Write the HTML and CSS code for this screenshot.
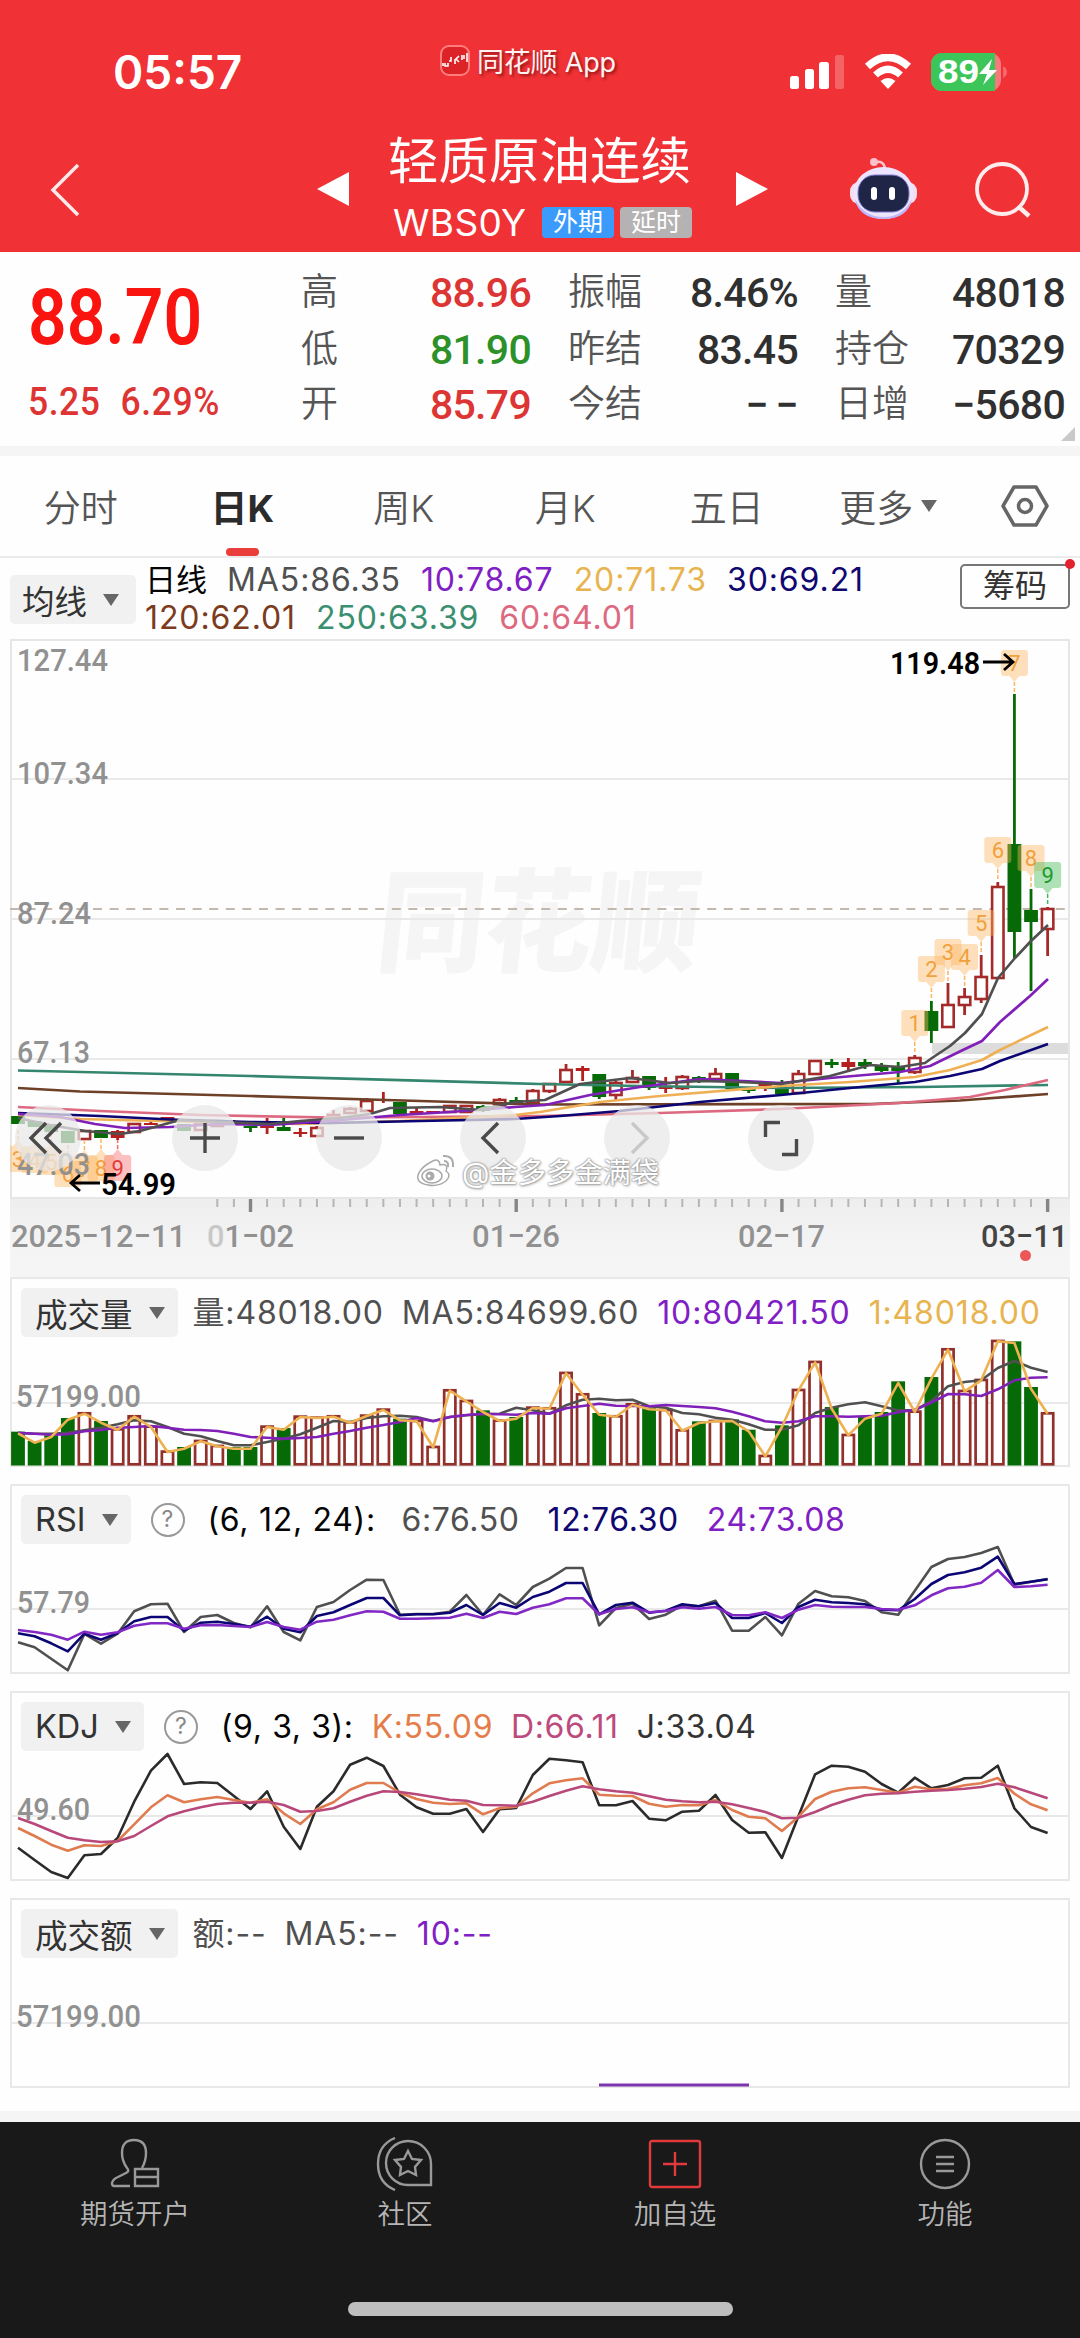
FILE: index.html
```
<!DOCTYPE html>
<html lang="zh-CN">
<head>
    <meta charset="UTF-8">
    <title>轻质原油连续 WBS0Y</title>
    <link rel="stylesheet" href="styles.css">
</head>
<body>
    <header class="header">
        <div class="status-bar">
            <div class="time">05:57</div>
            <div class="app-name">
                <svg width="30" height="31" viewBox="0 0 30 31">
                    <rect x="1" y="1" width="28" height="29" rx="8" fill="#dc2327" stroke="#ff7d7d" stroke-width="2"/>
                    <path d="M3 18v3M5 18v3h3v-3M11 12v4h-2M15 14v5M19 11l-3 3 3 3M22 10v5M24 10v4M27 8v9" stroke="#fff" stroke-width="1.6" fill="none"/>
                </svg>
                <span>同花顺 App</span>
            </div>
            <div class="status-icons">
                <svg width="54" height="36" viewBox="0 0 54 36">
                    <rect x="0" y="22" width="9" height="13" rx="2.5" fill="#fff"/>
                    <rect x="15" y="15" width="9" height="20" rx="2.5" fill="#fff"/>
                    <rect x="29" y="8" width="10" height="27" rx="2.5" fill="#fff"/>
                    <rect x="45" y="1" width="9" height="34" rx="2.5" fill="#fff" opacity=".25"/>
                </svg>
                <svg class="wifi" width="48" height="36" viewBox="0 0 48 36">
                    <path d="M3.500 12.500Q24-6 44.500 12.500" fill="none" stroke="#fff" stroke-width="7.500"/>
                    <path d="M11.500 21Q24 9.500 36.500 21" fill="none" stroke="#fff" stroke-width="7"/>
                    <path d="M16.500 27Q24 21 31.500 27L24 35Z" fill="#fff"/>
                </svg>
                <svg class="battery" width="76" height="40" viewBox="0 0 76 40">
                    <rect x="0" y="1" width="70" height="38" rx="11" fill="#f67a7d"/>
                    <path d="M11 1H64V39H11A11 11 0 0 1 0 28V12A11 11 0 0 1 11 1Z" fill="#3cc65a"/>
                    <path d="M72 14Q76 16 76 20T72 26Z" fill="#f5666a"/>
                    <text x="7" y="31" textLength="41" lengthAdjust="spacingAndGlyphs" class="battery-text">89</text>
                    <path d="M61 7L48 22H56L52 33L66 18H58Z" fill="#fff"/>
                </svg>
            </div>
        </div>
        <div class="nav-bar">
            <svg class="back" width="30" height="54" viewBox="0 0 30 54">
                <path d="M28 2L3 27L28 52" fill="none" stroke="#ffe9ea" stroke-width="3.500"/>
            </svg>
            <svg class="prev" width="32" height="34" viewBox="0 0 32 34"><path d="M0 17L32 0V34Z" fill="#fff"/></svg>
            <div class="title">
                <h1>轻质原油连续</h1>
                <div class="code-row">
                    <span class="code">WBS0Y</span>
                    <span class="badge blue">外期</span>
                    <span class="badge gray">延时</span>
                </div>
            </div>
            <svg class="next" width="32" height="34" viewBox="0 0 32 34"><path d="M32 17L0 0V34Z" fill="#fff"/></svg>
            <svg class="robot" width="68" height="62" viewBox="0 0 68 62">
                <path d="M25 5Q34 3 35 12" fill="none" stroke="#ffc4cd" stroke-width="2.500"/>
                <circle cx="24" cy="5" r="4" fill="#ffc0ca"/>
                <rect x="0" y="25" width="67" height="22" rx="9" fill="#f6dcf0"/>
                <ellipse cx="33.500" cy="36" rx="30" ry="26" fill="#ede4ff"/>
                <path d="M5 42Q14 60 33.500 60T62 42Q58 62 33.500 62T5 42Z" fill="#bdb6fb"/>
                <rect x="8" y="18" width="51" height="37" rx="17" fill="#1e2546" stroke="#7e7cc9" stroke-width="1"/>
                <rect x="21" y="30" width="6" height="13" rx="3" fill="#fff"/>
                <rect x="39" y="30" width="6" height="13" rx="3" fill="#fff"/>
            </svg>
            <svg class="search" width="56" height="56" viewBox="0 0 56 56">
                <circle cx="27" cy="27" r="25" fill="none" stroke="#ffeced" stroke-width="3.800"/>
                <path d="M44 45L54 54" stroke="#ffeced" stroke-width="4.500"/>
            </svg>
        </div>
    </header>

    <section class="quote">
        <div class="price">
            <div class="last">88.70</div>
            <div class="change"><span>5.25</span><span>6.29%</span></div>
        </div>
        <div class="quote-grid">
            <span class="label">高</span><span class="value up">88.96</span>
            <span class="label">振幅</span><span class="value">8.46%</span>
            <span class="label">量</span><span class="value">48018</span>
            <span class="label">低</span><span class="value down">81.90</span>
            <span class="label">昨结</span><span class="value">83.45</span>
            <span class="label">持仓</span><span class="value">70329</span>
            <span class="label">开</span><span class="value up">85.79</span>
            <span class="label">今结</span><span class="value">−&thinsp;−</span>
            <span class="label">日增</span><span class="value">−5680</span>
        </div>
        <div class="corner"></div>
    </section>

    <nav class="tabs">
        <div class="tab">分时</div>
        <div class="tab active">日K</div>
        <div class="tab">周K</div>
        <div class="tab">月K</div>
        <div class="tab">五日</div>
        <div class="tab">更多<i class="arrow small"></i></div>
        <svg width="48" height="42" viewBox="0 0 48 42">
            <path d="M13 2H35L46 21L35 40H13L2 21Z" fill="none" stroke="#666" stroke-width="3.500" stroke-linejoin="round"/>
            <circle cx="24" cy="21" r="6.500" fill="none" stroke="#666" stroke-width="3.500"/>
        </svg>
    </nav>

    <section class="ma-bar">
        <div class="tag">均线<i class="arrow"></i></div>
        <div class="ma-list">
            <div class="ma-row">
                <span class="c-black">日线</span>
                <span class="c-dark">MA5:86.35</span>
                <span class="c-purple">10:78.67</span>
                <span class="c-yellow">20:71.73</span>
                <span class="c-navy">30:69.21</span>
            </div>
            <div class="ma-row">
                <span class="c-brown">120:62.01</span>
                <span class="c-teal">250:63.39</span>
                <span class="c-pink">60:64.01</span>
            </div>
        </div>
        <div class="chips">筹码</div>
    </section>

    <section class="kline">
        <svg id="kline" width="1060" height="560" viewBox="10 639 1060 560"></svg>
        <div class="chart-tools">
            <div class="tool"><svg width="66" height="66"><path d="M31 18L16 33L31 48M46 18L31 33L46 48"/></svg></div>
            <div class="tool"><svg width="66" height="66"><path d="M33 18V48M18 33H48"/></svg></div>
            <div class="tool"><svg width="66" height="66"><path d="M18 33H48"/></svg></div>
            <div class="tool"><svg width="66" height="66"><path d="M38 18L23 33L38 48"/></svg></div>
            <div class="tool off"><svg width="66" height="66"><path d="M28 18L43 33L28 48"/></svg></div>
            <div class="tool"><svg width="66" height="66"><path d="M32 17.500H17.500V32M34 49.500H48.500V34"/></svg></div>
        </div>
        <div class="author">
            <svg width="40" height="34" viewBox="0 0 40 34">
                <path d="M15 9Q23 4 24 12Q33 10 30 18Q36 22 30 28Q22 34 12 32Q0 30 2 22Q5 14 15 9Z" fill="#fff" stroke="#a9a9a9" stroke-width="1.500"/>
                <ellipse cx="16" cy="23" rx="10" ry="7" fill="#fff" stroke="#a9a9a9" stroke-width="1.500"/>
                <circle cx="14" cy="23" r="4.500" fill="#aaa"/>
                <circle cx="13" cy="23" r="1.500" fill="#fff"/>
                <path d="M27 3Q38 2 37 14M28 8Q33 8 32 14" fill="none" stroke="#aaa" stroke-width="2"/>
            </svg>
            <span>@金多多金满袋</span>
        </div>
    </section>
    <svg id="timeline" class="timeline" width="1060" height="78" viewBox="10 1199 1060 78"></svg>

    <section class="panel">
        <div class="panel-head">
            <div class="tag">成交量<i class="arrow"></i></div>
            <div class="values volume-values">
                <span class="c-dark">量:48018.00</span>
                <span class="c-dark">MA5:84699.60</span>
                <span class="c-purple">10:80421.50</span>
                <span class="c-yellow">1:48018.00</span>
            </div>
        </div>
        <svg id="volume" class="plot" width="1060" height="190" viewBox="10 0 1060 190"></svg>
    </section>
    <section class="panel">
        <div class="panel-head">
            <div class="tag">RSI<i class="arrow"></i></div>
            <div class="help">?</div>
            <div class="values rsi-values">
                <span class="c-black">(6, 12, 24):</span>
                <span class="c-dark">6:76.50</span>
                <span class="c-navy">12:76.30</span>
                <span class="c-purple">24:73.08</span>
            </div>
        </div>
        <svg id="rsi" class="plot" width="1060" height="190" viewBox="10 0 1060 190"></svg>
    </section>
    <section class="panel">
        <div class="panel-head">
            <div class="tag">KDJ<i class="arrow"></i></div>
            <div class="help">?</div>
            <div class="values kdj-values">
                <span class="c-black">(9, 3, 3):</span>
                <span class="c-orange">K:55.09</span>
                <span class="c-rose">D:66.11</span>
                <span class="c-ink">J:33.04</span>
            </div>
        </div>
        <svg id="kdj" class="plot" width="1060" height="190" viewBox="10 0 1060 190"></svg>
    </section>
    <section class="panel">
        <div class="panel-head">
            <div class="tag">成交额<i class="arrow"></i></div>
            <div class="values volume-values">
                <span class="c-dark">额:--</span>
                <span class="c-dark">MA5:--</span>
                <span class="c-purple">10:--</span>
            </div>
        </div>
        <svg id="amount" class="plot" width="1060" height="190" viewBox="10 0 1060 190"></svg>
    </section>

    <footer class="bottom">
        <div class="bottom-nav">
            <div class="item">
                <svg width="54" height="54" viewBox="0 0 54 54">
                    <path d="M22 49H6Q4 49 4 46Q5 42 10 40L18 36Q22 34 19 31Q14 24 14 16Q14 3 26 3T38 16Q38 24 34 31"/>
                    <path d="M27 32H50V49H27ZM27 40H50"/>
                </svg>
                <span>期货开户</span>
            </div>
            <div class="item">
                <svg width="58" height="54" viewBox="0 0 58 54">
                    <path d="M32 4A23 23 0 0 1 55 27V48H32A22 22 0 0 1 32 4Z"/>
                    <path d="M19 1Q2 8 2 27T19 53"/>
                    <path d="M32 14L36 22L45 23L39 30L40 38L32 34L24 38L25 30L19 23L28 22Z"/>
                </svg>
                <span>社区</span>
            </div>
            <div class="item">
                <svg class="red" width="54" height="54" viewBox="0 0 54 54">
                    <rect x="2" y="4" width="50" height="46" rx="2"/>
                    <path d="M27 15V39M15 27H39"/>
                </svg>
                <span>加自选</span>
            </div>
            <div class="item">
                <svg width="54" height="54" viewBox="0 0 54 54">
                    <circle cx="27" cy="27" r="24"/>
                    <path d="M18 20H36M18 27H36M18 34H36"/>
                </svg>
                <span>功能</span>
            </div>
        </div>
        <div class="home-bar"></div>
    </footer>
    <script src="charts.js"></script>
</body>
</html>
```

FILE: styles.css
```
* {
    box-sizing: border-box;
}
body {
    margin: 0;
    width: 1080px;
    height: 2338px;
    overflow: hidden;
    background-color: #fefefe;
    font-family: Inter, "Noto Sans CJK SC", sans-serif;
    color: #333;
}
svg {
    display: block;
}

/* Header */
.header {
    height: 252px;
    background-color: #f03135;
    color: #fff;
}
.status-bar {
    display: grid;
    grid-template-columns: 440px 350px 1fr;
    height: 126px;
    padding-top: 44px;
}
.time {
    padding-left: 113px;
    font-size: 46px;
    line-height: 56px;
    font-weight: 600;
}
.app-name {
    display: flex;
    align-items: center;
    gap: 7px;
    height: 31px;
    margin-top: 1px;
    font-size: 27px;
    color: #fff2f2;
    white-space: nowrap;
    letter-spacing: -0.2px;
    text-shadow: 2px 2px 3px rgba(80, 0, 0, 0.6);
}
.status-icons {
    display: flex;
    align-items: center;
    height: 56px;
}
.wifi {
    margin-left: 20px;
}
.battery {
    margin-left: 19px;
}
.battery-text {
    font: 700 34px "Liberation Sans", sans-serif;
    fill: #fff;
}
.nav-bar {
    display: flex;
    height: 126px;
}
.back {
    margin: 37px 0 0 50px;
}
.prev {
    margin: 46px 0 0 237px;
}
.title {
    width: 302px;
    margin: 0 43px 0 42px;
}
.title h1 {
    margin: 1px -10px 0 -3px;
    font-size: 50.5px;
    line-height: 68px;
    font-weight: 400;
    white-space: nowrap;
}
.code-row {
    display: flex;
    align-items: center;
    height: 38px;
    margin-top: 8px;
    padding-left: 2px;
}
.code {
    width: 149px;
    font-size: 37px;
    letter-spacing: 0.4px;
    flex-shrink: 0;
}
.badge {
    width: 72px;
    height: 31px;
    margin-right: 6px;
    border-radius: 4px;
    font-size: 25px;
    line-height: 30px;
    text-align: center;
    flex-shrink: 0;
}
.blue {
    background-color: #3b9bfd;
}
.gray {
    background-color: #b4b2b2;
}
.next {
    margin-top: 46px;
}
.robot {
    margin: 31px 0 0 82px;
}
.search {
    margin: 36px 0 0 57px;
}

/* Quote */
.quote {
    display: flex;
    position: relative;
    height: 204px;
    border-bottom: 10px solid #f5f5f5;
    font-family: Roboto, "Noto Sans CJK SC", sans-serif;
}
.price {
    width: 264px;
    padding-left: 28px;
    white-space: nowrap;
}
.last {
    margin-top: 22px;
    font-size: 77px;
    line-height: 88px;
    font-weight: 600;
    color: #fa1410;
    transform: scaleX(0.88);
    transform-origin: left;
}
.change {
    display: flex;
    gap: 22px;
    margin-top: 16px;
    font-size: 39px;
    line-height: 48px;
    font-weight: 500;
    letter-spacing: 0.6px;
    color: #dd3434;
    transform: scaleX(0.91);
    transform-origin: left;
}
.quote-grid {
    display: grid;
    grid-template-columns: 147px 120px 147px 120px 147px 120px;
    grid-template-rows: 57px 55px 56px;
    padding-top: 14px;
}
.label {
    padding-left: 37px;
    font-size: 37px;
    line-height: 54px;
    font-weight: 350;
    color: #555;
    white-space: nowrap;
}
.value {
    font-size: 41px;
    line-height: 54px;
    font-weight: 500;
    letter-spacing: -0.7px;
    text-align: right;
    color: #303030;
    white-space: nowrap;
}
.up {
    color: #dd3434;
}
.down {
    color: #2d9129;
}
.corner {
    position: absolute;
    right: 5px;
    bottom: 5px;
    border-left: 14px solid transparent;
    border-bottom: 14px solid #c9c9c9;
}

/* Tabs */
.tabs {
    display: grid;
    grid-template-columns: repeat(6, 161.5px) 111px;
    align-items: center;
    justify-items: center;
    height: 102px;
    border-bottom: 2px solid #ececec;
}
.tab {
    display: flex;
    align-items: center;
    justify-content: center;
    position: relative;
    width: 100%;
    height: 100px;
    padding-bottom: 1px;
    font-size: 37px;
    font-weight: 350;
    color: #555;
}
.tab.active {
    font-weight: 700;
    color: #2b2b2b;
}
.tab.active::after {
    content: "";
    position: absolute;
    left: 64px;
    bottom: 0;
    width: 33px;
    height: 8px;
    border-radius: 4px;
    background-color: #e93e3b;
}
.arrow {
    width: 0;
    border-left: 8.5px solid transparent;
    border-right: 8.5px solid transparent;
    border-top: 12px solid #666;
}
.arrow.small {
    margin-left: 8px;
}

/* Moving averages */
.ma-bar {
    display: flex;
    height: 81px;
    padding-left: 10px;
}
.tag {
    display: flex;
    align-items: center;
    gap: 16px;
    height: 49px;
    padding: 0 13px 0 14px;
    border-radius: 5px;
    background-color: #f1f1f1;
    font-size: 32.5px;
    color: #333;
    white-space: nowrap;
}
.ma-bar .tag {
    width: 126px;
    margin-top: 17px;
    padding: 0 12px;
    flex-shrink: 0;
}
.ma-list {
    width: 824px;
    padding: 3px 0 0 9px;
    flex-shrink: 0;
}
.ma-row {
    display: flex;
    gap: 20px;
    height: 38px;
    font-size: 32px;
    line-height: 38px;
    letter-spacing: 0.9px;
    white-space: nowrap;
}
.ma-row .c-black {
    font-size: 31px;
    letter-spacing: 0;
}
.chips {
    position: relative;
    width: 110px;
    height: 45px;
    margin-top: 6px;
    border: 2px solid #777;
    border-radius: 5px;
    font-size: 32px;
    line-height: 40px;
    text-align: center;
    flex-shrink: 0;
}
.chips::after {
    content: "";
    position: absolute;
    top: -7px;
    right: -7px;
    width: 10px;
    height: 10px;
    border-radius: 50%;
    background-color: #e3222f;
}
.c-black { color: #050505; }
.c-dark { color: #505050; }
.c-ink { color: #333; }
.c-purple { color: #8020c4; }
.c-yellow { color: #e8b450; }
.c-navy { color: #100870; }
.c-brown { color: #7b3b1c; }
.c-teal { color: #3a8f70; }
.c-pink { color: #dd6980; }
.c-orange { color: #e57d4b; }
.c-rose { color: #bd4a7c; }

/* K line */
.kline {
    position: relative;
    width: 1060px;
    height: 560px;
    margin-left: 10px;
}
.chart-tools {
    display: flex;
    gap: 78px;
    position: absolute;
    left: 5px;
    top: 466px;
}
.tool {
    width: 66px;
    height: 66px;
    border-radius: 50%;
    background-color: rgba(232, 232, 232, 0.75);
}
.tool:first-child {
    margin-right: 13px;
}
.tool path {
    fill: none;
    stroke: #4a4a4a;
    stroke-width: 3.4;
}
.tool.off path {
    stroke: #c8c8c8;
}
.author {
    display: flex;
    align-items: center;
    gap: 6px;
    position: absolute;
    left: 406px;
    top: 511px;
    height: 40px;
    font-size: 28.3px;
    color: #fff;
    white-space: nowrap;
    text-shadow: 0 0 2px #888, 0 0 2px #999, 1px 1px 3px #aaa;
}
.timeline {
    margin-left: 10px;
    background: linear-gradient(#eeeeee, #f5f5f5 70%);
}
.axis {
    font-family: Roboto, sans-serif;
    font-size: 32px;
    font-weight: 500;
    fill: #919191;
}
.axis.today {
    fill: #444;
}
.mark {
    font-family: Roboto, sans-serif;
    font-size: 32px;
    font-weight: 600;
    fill: #000;
}
.td {
    font-family: Roboto, sans-serif;
    font-size: 22px;
    text-anchor: middle;
}
.logo-text {
    font-family: "Noto Sans CJK SC", sans-serif;
    font-size: 112px;
    font-weight: 900;
    fill: #f5f5f5;
}

/* Indicator panels */
.panel {
    position: relative;
    width: 1060px;
    height: 190px;
    margin: 0 0 17px 10px;
    border: 2px solid #e8e8e8;
}
.panel-head {
    display: flex;
    align-items: center;
    position: absolute;
    left: 9px;
    top: 9px;
    z-index: 1;
}
.plot {
    margin: -2px 0 0 -2px;
}
.values {
    display: flex;
    padding-top: 1px;
    font-size: 32px;
    line-height: 40px;
    letter-spacing: 0.6px;
    white-space: nowrap;
}
.volume-values {
    gap: 18px;
    margin-left: 15px;
    letter-spacing: 0.85px;
}
.rsi-values {
    gap: 28px;
    margin-left: 23px;
}
.rsi-values .c-black {
    width: 166px;
    letter-spacing: 0.7px;
}
.kdj-values {
    gap: 18px;
    margin-left: 23px;
}
.help {
    width: 34px;
    height: 34px;
    margin-left: 20px;
    border: 2.5px solid #999;
    border-radius: 50%;
    font-size: 23px;
    line-height: 29px;
    text-align: center;
    color: #888;
}

/* Bottom */
.bottom {
    height: 227px;
    margin-top: 23px;
    border-top: 11px solid #f5f5f5;
    background-color: #191919;
}
.bottom-nav {
    display: grid;
    grid-template-columns: repeat(4, 270px);
    height: 180px;
    padding-top: 15px;
}
.item {
    display: flex;
    flex-direction: column;
    align-items: center;
    font-size: 27.5px;
    line-height: 40px;
    font-weight: 350;
    color: #b5b5b5;
}
.item span {
    margin-top: 3px;
}
.item svg {
    fill: none;
    stroke: #999;
    stroke-width: 2.4;
}
.item svg.red {
    stroke: #e23a3c;
}
.home-bar {
    width: 385px;
    height: 14px;
    margin-left: 348px;
    border-radius: 7px;
    background-color: #bebebe;
}
```

FILE: charts.js
```
const STEP = 16.607;
const UP = '#a52a2a';
const DOWN = '#066b06';
const xAt = i => 18 + STEP * i;

function line(points, color, width = 2.7) {
    return `<polyline points="${points.map(p => p.map(n => n.toFixed(1)).join(',')).join(' ')}" fill="none" stroke="${color}" stroke-width="${width}" stroke-linejoin="round"/>`;
}
function hline(y, color = '#e9e9e9') {
    return `<path d="M10 ${y}H1070" stroke="${color}" stroke-width="2"/>`;
}
function text(x, y, w, str, cls = 'axis') {
    return `<text x="${x}" y="${y}" textLength="${w}" lengthAdjust="spacingAndGlyphs" class="${cls}">${str}</text>`;
}

// [direction, high, body top, body bottom, low]
const candles = [
    ['d', 1116, 1116, 1124, 1124], ['d', 1121, 1121, 1127, 1127], ['d', 1124, 1124, 1132, 1132],
    ['d', 1131, 1131, 1143, 1143], ['u', 1130, 1131, 1139, 1140], ['d', 1130, 1130, 1138, 1138],
    ['s', 1130, 1131, 1138, 1140], ['u', 1123, 1124, 1132, 1132], ['s', 1122, 1123, 1125, 1125],
    ['s', 1117, 1117, 1119, 1119], ['d', 1124, 1124, 1131, 1131], ['u', 1123, 1124, 1130, 1130],
    ['u', 1120, 1121, 1126, 1127], ['s', 1120, 1121, 1123, 1124], ['d', 1126, 1126, 1128, 1132],
    ['s', 1118, 1126, 1128, 1134], ['d', 1118, 1127, 1131, 1131], ['s', 1128, 1132, 1134, 1137],
    ['u', 1126, 1128, 1136, 1136], ['u', 1110, 1115, 1121, 1121], ['u', 1107, 1109, 1113, 1113],
    ['u', 1098, 1101, 1111, 1112], ['s', 1092, 1099, 1101, 1103], ['d', 1102, 1102, 1114, 1114],
    ['s', 1108, 1111, 1114, 1115], ['s', 1111, 1111, 1113, 1113], ['u', 1105, 1106, 1112, 1113],
    ['u', 1105, 1106, 1112, 1113], ['d', 1105, 1106, 1111, 1112], ['u', 1098, 1100, 1105, 1106],
    ['d', 1097, 1100, 1103, 1104], ['u', 1089, 1091, 1103, 1104], ['u', 1083, 1084, 1091, 1093],
    ['u', 1064, 1070, 1082, 1083], ['s', 1066, 1068, 1071, 1081], ['d', 1074, 1074, 1097, 1099],
    ['u', 1081, 1083, 1095, 1100], ['u', 1070, 1078, 1082, 1083], ['d', 1076, 1076, 1088, 1090],
    ['s', 1077, 1086, 1089, 1093], ['u', 1075, 1077, 1088, 1090], ['d', 1076, 1077, 1080, 1083],
    ['u', 1068, 1074, 1079, 1080], ['d', 1073, 1073, 1089, 1089], ['d', 1089, 1089, 1091, 1093],
    ['s', 1083, 1084, 1086, 1091], ['d', 1080, 1087, 1094, 1095], ['u', 1070, 1074, 1093, 1094],
    ['u', 1060, 1061, 1074, 1075], ['d', 1059, 1062, 1065, 1068], ['s', 1058, 1062, 1067, 1070],
    ['d', 1059, 1062, 1066, 1069], ['d', 1063, 1065, 1071, 1072], ['d', 1062, 1066, 1071, 1083],
    ['u', 1055, 1058, 1072, 1074], ['d', 1001, 1011, 1031, 1043], ['u', 983, 1005, 1027, 1028],
    ['u', 988, 997, 1005, 1015], ['u', 955, 977, 999, 1003], ['u', 882, 887, 978, 979],
    ['d', 694, 844, 932, 958], ['d', 889, 910, 922, 991], ['u', 907, 909, 929, 956]
];

function candle([dir, high, top, bottom, low], i) {
    const x = xAt(i);
    const color = dir === 'd' ? DOWN : dir === 's' ? '#b51f1f' : UP;
    const wick = `<path d="M${x} ${high}V${top}M${x} ${bottom}V${low}" stroke="${color}" stroke-width="2.8"/>`;
    if (dir === 'u') {
        return wick + `<rect x="${x - 5.7}" y="${top}" width="11.4" height="${bottom - top}" fill="#fff" stroke="${color}" stroke-width="2.6"/>`;
    }
    return wick + `<rect x="${x - 6.9}" y="${top}" width="13.8" height="${bottom - top}" fill="${color}"/>`;
}

// Sequence badges: below the candle on the left side, above it on the right
function badge(i, n, y, to, bg = '#ffb560', fg = '#f0a03c') {
    const x = xAt(i);
    const above = to > y;
    const tip = above ? `M${x - 5} ${y + 26}L${x} ${y + 32}L${x + 5} ${y + 26}Z` : `M${x - 5} ${y}L${x} ${y - 6}L${x + 5} ${y}Z`;
    return `<rect x="${x - 13.5}" y="${y}" width="27" height="26" rx="3" fill="${bg}" opacity=".42"/>
        <path d="${tip}" fill="${bg}" opacity=".42"/>
        <path d="M${x} ${above ? y + 32 : y - 6}V${to}" stroke="${bg}" stroke-width="1.5" stroke-dasharray="4 2"/>
        <text x="${x}" y="${y + 21}" class="td" fill="${fg}">${n}</text>`;
}

const averages = [
    ['#35866e', [[18, 1070.5], [250, 1076], [540, 1084], [640, 1086], [781, 1088], [920, 1087], [1048, 1085]]],
    ['#6f4028', [[18, 1088], [80, 1091.5], [250, 1096], [420, 1101], [540, 1104.5], [870, 1104], [960, 1100.5], [1048, 1094]]],
    ['#dd6980', [[18, 1107], [100, 1111], [200, 1115], [330, 1117.5], [420, 1117], [540, 1116], [660, 1113], [781, 1109], [900, 1103], [970, 1097], [1005, 1090], [1048, 1080]]],
    ['#efb055', [[18, 1115], [80, 1119], [200, 1122], [300, 1124], [400, 1121], [515, 1115], [540, 1112], [600, 1102], [660, 1096], [781, 1086], [850, 1082], [915, 1077], [950, 1070], [982, 1060], [1000, 1050], [1048, 1027]]],
    ['#0c0674', [[18, 1113], [100, 1116], [170, 1119.5], [250, 1122], [330, 1123], [420, 1121], [515, 1119], [560, 1116], [620, 1111], [700, 1102], [781, 1095], [850, 1088], [915, 1082], [950, 1076], [982, 1069], [1000, 1061], [1048, 1044]]],
    ['#8020b8', [[18, 1114], [60, 1117], [95, 1124], [125, 1128], [170, 1127], [220, 1124], [270, 1125], [330, 1121], [400, 1115], [450, 1112], [515, 1107], [545, 1105], [590, 1095], [640, 1087], [700, 1079], [781, 1083], [830, 1078], [900, 1072], [930, 1066], [965, 1049], [982, 1041], [1000, 1022], [1030, 996], [1048, 979]]],
    ['#505050', [[18, 1118], [50, 1125], [85, 1131], [120, 1134], [140, 1131], [180, 1120], [220, 1122], [270, 1124], [300, 1121], [340, 1118], [370, 1114], [390, 1108], [440, 1107], [480, 1110], [515, 1102], [545, 1100], [580, 1084], [630, 1078], [670, 1083], [700, 1081], [740, 1082], [781, 1084], [830, 1076], [870, 1065], [900, 1067], [925, 1063], [932, 1058], [950, 1046], [965, 1033], [982, 1014], [998, 978], [1015, 958], [1031, 941], [1048, 925]]]
];

let k = '<text class="logo-text" x="0" y="0" textLength="322" lengthAdjust="spacingAndGlyphs" transform="translate(374 963) skewX(-6)">同花顺</text>';
k += '<rect x="932" y="1043" width="138" height="11" fill="#dcdcdc"/>';
k += [779, 919, 1059].map(y => hline(y)).join('');
k += '<rect x="11" y="640" width="1058" height="558" fill="none" stroke="#e6e6e6" stroke-width="2"/>';
k += '<path d="M10 909H1070" stroke="#c3b8ad" stroke-width="2" stroke-dasharray="9 7.6"/>';
k += candles.map(candle).join('');
k += averages.map(([color, points]) => line(points, color)).join('');
k += badge(0, 3, 1146, 1130) + badge(1, 4, 1147, 1130) + badge(2, 5, 1149, 1134) + badge(3, 6, 1161, 1145);
k += badge(4, 7, 1156, 1141) + badge(5, 8, 1155, 1139) + badge(6, 9, 1155, 1140, '#f76b6b', '#e23b3b');
k += badge(54, 1, 1010, 1054) + badge(55, 2, 956, 1000) + badge(56, 3, 939, 982) + badge(57, 4, 944, 987);
k += badge(58, 5, 910, 954) + badge(59, 6, 837, 881) + badge(60, 7, 650, 693) + badge(61, 8, 845, 888);
k += badge(62, 9, 862, 906, '#42b955', '#1b9b2c');
k += text(17, 671, 91, '127.44') + text(17, 784, 91, '107.34') + text(17, 924, 74, '87.24');
k += text(17, 1063, 73, '67.13') + text(17, 1175, 73, '47.03');
k += text(890, 674, 90, '119.48', 'mark') + text(101, 1195, 75, '54.99', 'mark');
k += '<path d="M983 662H1012M1004 654L1013 662L1004 670" fill="none" stroke="#000" stroke-width="2.8"/>';
k += '<path d="M100 1183H71M80 1175L71 1183L80 1191" fill="none" stroke="#000" stroke-width="2.8"/>';
document.getElementById('kline').innerHTML = k;

let t = '';
for (let i = 12; i < 63; i++) {
    const major = (i - 14) % 16 === 0;
    t += `<path d="M${xAt(i)} 1199V${major ? 1212 : 1207}" stroke="${major ? '#858585' : '#b5b5b5'}" stroke-width="${major ? 3.4 : 2}"/>`;
}
t += text(11, 1247, 175, '2025−12−11') + text(207, 1247, 87, '<tspan fill="#c8c8c8">0</tspan>1−02');
t += text(472, 1247, 88, '01−26') + text(738, 1247, 87, '02−17') + text(981, 1247, 87, '03−11', 'axis today');
t += '<circle cx="1025.5" cy="1255.5" r="5.5" fill="#ee5757"/>';
document.getElementById('timeline').innerHTML = t;

// Indicator values are in thirds of a pixel, measured from `top`
const series = (values, top, color, width = 2.6) => line(values.map((v, i) => [xAt(i), (v - top) / 3]), color, width);

const downDays = [0, 1, 2, 3, 5, 10, 13, 14, 16, 23, 28, 30, 35, 38, 41, 43, 44, 46, 49, 51, 52, 53, 55, 60, 61];
const vol = [484, 512, 495, 443, 425, 452, 473, 434, 465, 540, 530, 508, 523, 530, 530, 465, 473, 435, 438, 434, 452, 432, 414, 445, 448, 526, 356, 388, 420, 447, 440, 408, 410, 304, 368, 428, 434, 398, 412, 415, 476, 453, 448, 447, 478, 553, 465, 355, 271, 410, 490, 440, 425, 333, 420, 320, 233, 358, 325, 208, 213, 350, 425];
const volMa5 = [487, 490, 490, 487, 480, 472, 462, 450, 453, 470, 490, 498, 512, 525, 525, 515, 505, 492, 472, 452, 455, 443, 438, 436, 440, 452, 440, 435, 432, 430, 412, 420, 430, 405, 388, 385, 390, 388, 408, 412, 428, 432, 442, 448, 462, 478, 478, 465, 428, 412, 402, 396, 408, 420, 420, 392, 348, 335, 330, 293, 272, 292, 305];
const volMa10 = [488, 490, 493, 492, 483, 479, 472, 470, 467, 472, 478, 479, 482, 490, 500, 502, 505, 503, 500, 490, 482, 472, 464, 455, 443, 453, 440, 434, 430, 432, 433, 428, 430, 414, 407, 400, 406, 407, 408, 404, 407, 410, 414, 424, 438, 453, 457, 453, 438, 438, 439, 438, 436, 426, 418, 397, 371, 372, 377, 357, 330, 322, 321];

let v = hline(126);
vol.forEach((value, i) => {
    const y = (value - 20) / 3;
    if (downDays.includes(i)) {
        v += `<rect x="${xAt(i) - 6.9}" y="${y}" width="13.8" height="${188.5 - y}" fill="${DOWN}"/>`;
    } else {
        v += `<rect x="${xAt(i) - 5.6}" y="${y + 1.3}" width="11.2" height="${186 - y}" fill="#fff" stroke="#92302c" stroke-width="2.7"/>`;
    }
});
v += series(volMa5, 20, '#505050') + series(volMa10, 20, '#8020b8') + series(vol.map(n => n + 5), 20, '#eeb152');
v += text(16, 130, 125, '57199.00');
document.getElementById('volume').innerHTML = v;

const rsi6 = [488, 503, 537, 572, 463, 492, 462, 395, 374, 372, 457, 412, 406, 430, 443, 380, 457, 482, 382, 367, 331, 300, 301, 405, 403, 403, 396, 346, 406, 344, 376, 322, 297, 265, 265, 437, 385, 372, 418, 405, 377, 380, 363, 453, 453, 412, 467, 372, 334, 350, 353, 364, 398, 405, 333, 262, 238, 232, 220, 202, 315, 306, 298];
const rsi12 = [461, 470, 491, 515, 462, 480, 460, 425, 412, 412, 453, 429, 426, 433, 441, 411, 447, 458, 409, 398, 376, 355, 355, 407, 404, 404, 399, 376, 406, 370, 384, 352, 336, 310, 310, 404, 376, 369, 399, 393, 374, 380, 370, 415, 415, 400, 430, 382, 360, 368, 370, 374, 390, 392, 358, 313, 286, 278, 264, 231, 313, 306, 299];
const rsi24 = [451, 457, 465, 480, 456, 465, 458, 438, 431, 431, 447, 437, 436, 439, 442, 427, 442, 450, 426, 420, 407, 395, 396, 417, 417, 416, 414, 402, 415, 396, 403, 384, 374, 356, 356, 404, 388, 383, 398, 394, 383, 387, 382, 406, 407, 398, 415, 390, 376, 381, 382, 382, 388, 390, 377, 347, 326, 321, 309, 271, 322, 320, 315];
document.getElementById('rsi').innerHTML = hline(125) + series(rsi6, 13, '#505050') + series(rsi12, 13, '#0c0674')
    + series(rsi24, 13, '#8228c4') + text(17, 129, 73, '57.79');

const kdjK = [1044, 1068, 1094, 1112, 1096, 1098, 1083, 1033, 982, 946, 967, 958, 951, 960, 968, 958, 1000, 1032, 988, 967, 929, 909, 909, 938, 957, 968, 972, 970, 1003, 985, 980, 940, 910, 901, 895, 944, 947, 948, 971, 980, 975, 976, 960, 990, 1010, 1015, 1053, 1010, 957, 935, 925, 922, 930, 938, 920, 928, 926, 916, 910, 894, 941, 973, 991];
const kdjD = [1014, 1032, 1053, 1073, 1081, 1086, 1084, 1068, 1038, 1009, 994, 982, 972, 968, 968, 965, 975, 995, 993, 985, 965, 947, 934, 936, 943, 951, 959, 962, 975, 976, 977, 965, 948, 932, 919, 928, 934, 938, 949, 959, 964, 967, 965, 973, 984, 996, 1015, 1013, 996, 975, 959, 946, 941, 940, 935, 932, 930, 926, 921, 911, 922, 938, 955];
const kdjJ = [1103, 1140, 1176, 1194, 1126, 1122, 1074, 965, 872, 822, 912, 907, 909, 948, 987, 934, 1040, 1107, 980, 934, 854, 833, 858, 944, 982, 1001, 1001, 987, 1056, 988, 984, 885, 836, 841, 847, 976, 976, 963, 1016, 1021, 995, 992, 945, 1020, 1058, 1057, 1134, 1008, 883, 857, 860, 875, 912, 938, 893, 925, 915, 895, 893, 857, 985, 1041, 1059];
document.getElementById('kdj').innerHTML = hline(125) + text(17, 129, 73, '49.60') + series(kdjJ, 633, '#2b2b2b')
    + series(kdjK, 633, '#e07b50') + series(kdjD, 633, '#b8487a');

document.getElementById('amount').innerHTML = hline(125) + text(16, 129, 125, '57199.00')
    + '<path d="M599 187H749" stroke="#7d35ad" stroke-width="3"/>';
```
